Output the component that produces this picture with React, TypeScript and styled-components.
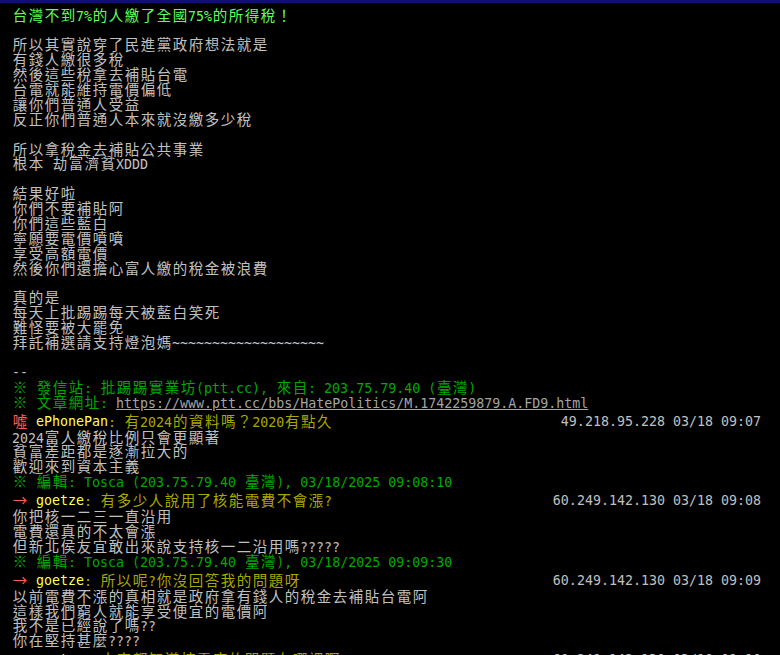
import React from 'react';
import styled, { createGlobalStyle } from 'styled-components';

const GlobalStyle = createGlobalStyle`
  html, body {
    margin: 0;
    padding: 0;
    background: #000;
  }
  body {
    overflow: hidden;
  }
`;

const colors = {
  text: '#c0c0c0',
  title: '#5cff5c',
  green: '#00a800',
  olive: '#a8a800',
  yellow: '#ffff55',
  red: '#ff5c5c',
  link: '#a4a4a4',
};

type Seg = { t: string; c?: string; link?: boolean };
type Row =
  | { kind: 'text'; segs: Seg[] }
  | { kind: 'push'; tag: string; user: string; content: string; ip: string };

const txt = (t: string, c?: string): Row => ({ kind: 'text', segs: [{ t, c }] });
const blank: Row = { kind: 'text', segs: [] };
const push = (tag: string, user: string, content: string, ip: string): Row => ({
  kind: 'push',
  tag,
  user,
  content,
  ip,
});

const rows: Row[] = [
  txt('台灣不到7%的人繳了全國75%的所得稅！', colors.title),
  blank,
  txt('所以其實說穿了民進黨政府想法就是'),
  txt('有錢人繳很多稅'),
  txt('然後這些稅拿去補貼台電'),
  txt('台電就能維持電價偏低'),
  txt('讓你們普通人受益'),
  txt('反正你們普通人本來就沒繳多少稅'),
  blank,
  txt('所以拿稅金去補貼公共事業'),
  txt('根本 劫富濟貧XDDD'),
  blank,
  txt('結果好啦'),
  txt('你們不要補貼阿'),
  txt('你們這些藍白'),
  txt('寧願要電價噴噴'),
  txt('享受高額電價'),
  txt('然後你們還擔心富人繳的稅金被浪費'),
  blank,
  txt('真的是'),
  txt('每天上批踢踢每天被藍白笑死'),
  txt('難怪要被大罷免'),
  txt('拜託補選請支持燈泡媽~~~~~~~~~~~~~~~~~~~'),
  blank,
  txt('--'),
  txt('※ 發信站: 批踢踢實業坊(ptt.cc), 來自: 203.75.79.40 (臺灣)', colors.green),
  {
    kind: 'text',
    segs: [
      { t: '※ 文章網址: ', c: colors.green },
      { t: 'https://www.ptt.cc/bbs/HatePolitics/M.1742259879.A.FD9.html', link: true },
    ],
  },
  push('噓', 'ePhonePan', ': 有2024的資料嗎？2020有點久', '49.218.95.228 03/18 09:07'),
  txt('2024富人繳稅比例只會更顯著'),
  txt('貧富差距都是逐漸拉大的'),
  txt('歡迎來到資本主義'),
  txt('※ 編輯: Tosca (203.75.79.40 臺灣), 03/18/2025 09:08:10', colors.green),
  push('→', 'goetze', ': 有多少人說用了核能電費不會漲?', '60.249.142.130 03/18 09:08'),
  txt('你把核一二三一直沿用'),
  txt('電費還真的不太會漲'),
  txt('但新北侯友宜敢出來說支持核一二沿用嗎?????'),
  txt('※ 編輯: Tosca (203.75.79.40 臺灣), 03/18/2025 09:09:30', colors.green),
  push('→', 'goetze', ': 所以呢?你沒回答我的問題呀', '60.249.142.130 03/18 09:09'),
  txt('以前電費不漲的真相就是政府拿有錢人的稅金去補貼台電阿'),
  txt('這樣我們窮人就能享受便宜的電價阿'),
  txt('我不是已經說了嗎??'),
  txt('你在堅持甚麼????'),
  push('→', 'goetze', ': 大家都知道核電廠的問題在哪裡啊', '60.249.142.130 03/18 09:10'),
];

// splits a string into half-width runs and single full-width cells
function Term({ text }: { text: string }) {
  const parts = text.match(/[\x00-\xff]+|[^\x00-\xff]/g) ?? [];
  return (
    <>
      {parts.map((p, i) =>
        /^[\x00-\xff]/.test(p) ? <Half key={i}>{p}</Half> : <Wide key={i}>{p}</Wide>
      )}
    </>
  );
}

export default function App() {
  return (
    <>
      <GlobalStyle />
      <Screen>
        <TopBar />
        <Content>
          {rows.map((row, i) =>
            row.kind === 'text' ? (
              <Line key={i}>
                {row.segs.map((s, j) =>
                  s.link ? (
                    <Link key={j}>
                      <Term text={s.t} />
                    </Link>
                  ) : (
                    <Ink key={j} $c={s.c}>
                      <Term text={s.t} />
                    </Ink>
                  )
                )}
              </Line>
            ) : (
              <PushRow key={i}>
                <Ink $c={colors.red}>
                  <Term text={row.tag + ' '} />
                </Ink>
                <Ink $c={colors.yellow}>
                  <Term text={row.user} />
                </Ink>
                <Ink $c={colors.olive}>
                  <Term text={row.content} />
                </Ink>
                <PushIp>
                  <Term text={row.ip} />
                </PushIp>
              </PushRow>
            )
          )}
        </Content>
      </Screen>
    </>
  );
}

const Screen = styled.div`
  width: 780px;
  height: 655px;
  overflow: hidden;
  background: #000;
  color: ${colors.text};
`;

const TopBar = styled.div`
  height: 3px;
  background: #10106e;
`;

const Content = styled.div`
  padding: 4.5px 19px 0 12px;
`;

const Line = styled.div`
  height: 14.9px;
  line-height: 14.9px;
  white-space: pre;
`;

const PushRow = styled.div`
  display: flex;
  height: 20px;
  line-height: 21px;
  white-space: pre;
`;

const PushIp = styled.span`
  margin-left: auto;
  color: ${colors.text};
`;

const Ink = styled.span<{ $c?: string }>`
  color: ${(p) => p.$c ?? colors.text};
`;

const Link = styled.span`
  color: ${colors.link};
  text-decoration: underline;
  text-underline-offset: 1px;
`;

const Half = styled.span`
  font-family: 'DejaVu Sans Mono', 'Liberation Mono', monospace;
  font-size: 13.3px;
`;

const Wide = styled.span`
  display: inline-block;
  width: 16px;
  text-align: center;
  font-family: 'Noto Sans CJK TC', 'Noto Sans CJK JP', sans-serif;
  font-size: 14.5px;
`;
